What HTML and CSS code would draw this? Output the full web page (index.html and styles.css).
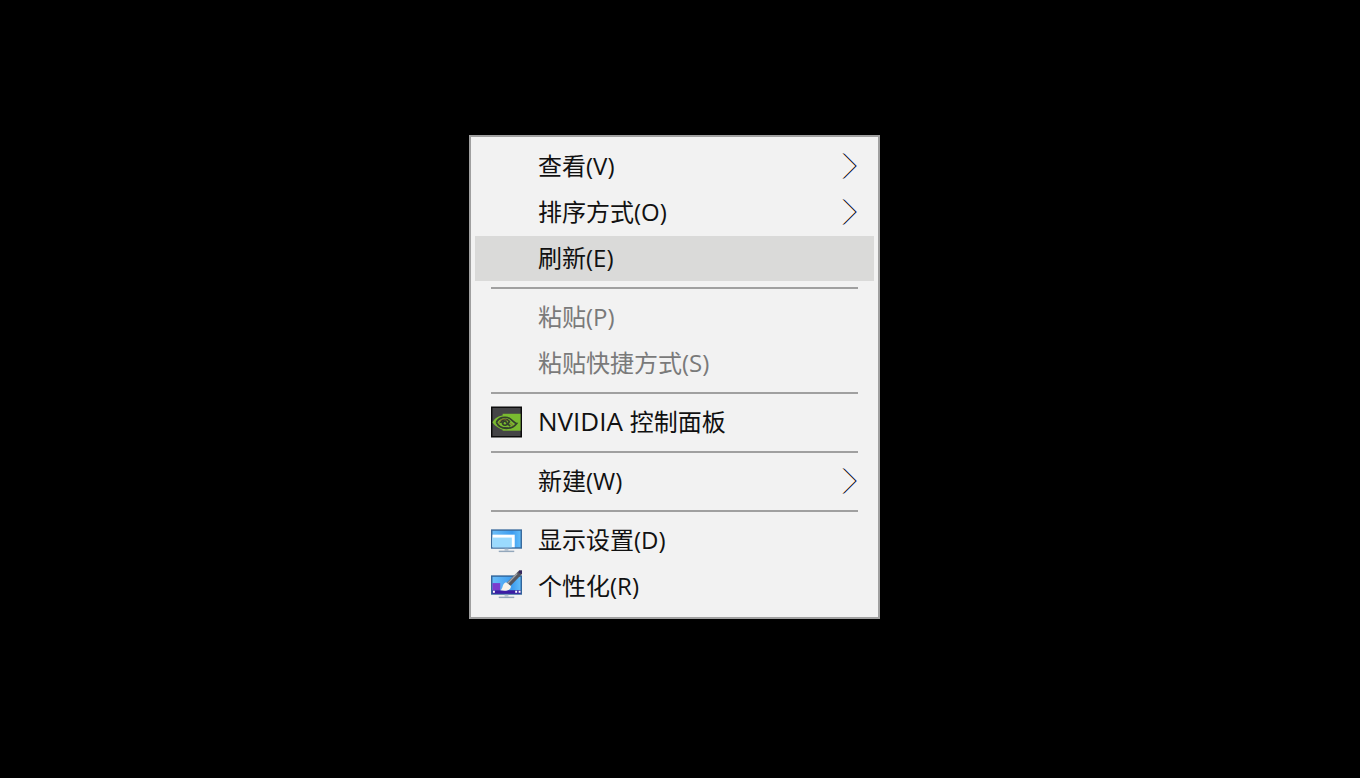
FILE: index.html
```html
<!DOCTYPE html>
<html lang="zh-CN">
<head>
<meta charset="utf-8">
<meta name="viewport" content="width=device-width, initial-scale=1">
<title>桌面</title>
<link rel="stylesheet" href="styles.css">
</head>
<body class="desktop">
<div class="menu" role="menu">
  <div class="group">
    <button class="item" role="menuitem"><span class="icon"></span><span class="label">查看(V)</span><svg class="arrow" viewBox="0 0 16 28"><path class="fringe-warm" d="M.5 1.500L13 14L.5 26.500"/><path class="fringe-cool" d="M2.200 1.500L14.700 14L2.200 26.500"/><path class="stroke" d="M1.500 1.500L14 14L1.500 26.500"/></svg></button>
    <button class="item" role="menuitem"><span class="icon"></span><span class="label">排序方式(O)</span><svg class="arrow" viewBox="0 0 16 28"><path class="fringe-warm" d="M.5 1.500L13 14L.5 26.500"/><path class="fringe-cool" d="M2.200 1.500L14.700 14L2.200 26.500"/><path class="stroke" d="M1.500 1.500L14 14L1.500 26.500"/></svg></button>
    <button class="item active" role="menuitem"><span class="icon"></span><span class="label">刷新(E)</span></button>
  </div>
  <hr class="separator">
  <div class="group">
    <button class="item" role="menuitem" disabled><span class="icon"></span><span class="label">粘贴(P)</span></button>
    <button class="item" role="menuitem" disabled><span class="icon"></span><span class="label">粘贴快捷方式(S)</span></button>
  </div>
  <hr class="separator">
  <div class="group">
    <button class="item" role="menuitem">
      <svg class="icon" viewBox="0 0 32 32">
        <path fill="#0b0b0b" d="M0 0h32v32H0z"/>
        <path fill="#444446" d="M1.500 1.500h29v29h-29z"/>
        <path fill="#7abb30" d="M12 7.500h18.500v17.500H12z"/>
        <path fill="#7abb30" d="M1.500 16.500C3 13 7 9.500 14 9v15.500C8 23 4 20 1.500 16.500z"/>
        <g fill="none" stroke="#34402c" stroke-width="1.700">
          <path d="M5.500 16.500c2-5 9-7 14-4 3 2 5 5 7 5-3 4-8 5.500-13 4.500"/>
          <path d="M5.500 16.500c2 4 6 6.500 12 6"/>
          <path d="M10 17c1-4 6-5 9-1.500-2 4-5 5-7 2.500 0-2 1-3 3-3 1 2 2 4 5 5"/>
        </g>
        <path fill="none" stroke="#8b642d" d="M8 18c2-6 7-6 9-3M20 17l3 3"/>
      </svg>
      <span class="label"><span class="brand">NVIDIA </span>控制面板</span></button>
  </div>
  <hr class="separator">
  <div class="group">
    <button class="item" role="menuitem"><span class="icon"></span><span class="label">新建(W)</span><svg class="arrow" viewBox="0 0 16 28"><path class="fringe-warm" d="M.5 1.500L13 14L.5 26.500"/><path class="fringe-cool" d="M2.200 1.500L14.700 14L2.200 26.500"/><path class="stroke" d="M1.500 1.500L14 14L1.500 26.500"/></svg></button>
  </div>
  <hr class="separator">
  <div class="group">
    <button class="item" role="menuitem">
      <svg class="icon" viewBox="0 0 32 32">
        <defs><linearGradient id="sky" x1="0" y1="0" x2="1" y2="0"><stop offset="0" stop-color="#6abdf8"/><stop offset=".7" stop-color="#3e9df0"/><stop offset="1" stop-color="#62bdfa"/></linearGradient></defs>
        <path fill="#3a6b9d" d="M0 5h32v20H0z"/>
        <path fill="url(#sky)" d="M1.500 6.500h29v17h-29z"/>
        <path fill="#fff" d="M1.500 10.500h23v13h-23z"/>
        <path fill="#9bdafe" d="M1.500 13.500h20v10h-20z"/>
        <path fill="#b7c4d1" d="M14 25h4v2h-4z"/>
        <path fill="#93a7bb" d="M8 27h16v1.500H8z"/>
      </svg>
      <span class="label">显示设置(D)</span></button>
    <button class="item" role="menuitem">
      <svg class="icon" viewBox="0 0 32 32">
        <path fill="#31659b" d="M0 5h32v20H0z"/>
        <path fill="url(#sky)" d="M1.500 6.500h29v14h-29z"/>
        <path fill="#7b3ccd" d="M1.500 13h8v7.500h-8z"/>
        <path fill="#3c1ca5" d="M1.500 20.500h29v3.500h-29z"/>
        <path fill="#fff" d="M2 21h2v2H2zM25 21h2v2h-2zM28.500 21h2v2h-2z"/>
        <path fill="#b7c4d1" d="M14 25h4v2h-4z"/>
        <path fill="#93a7bb" d="M8 27h16v1.500H8z"/>
        <path fill="#55565f" d="M29 0h3v3.500L20 16l-4-3z"/>
        <path fill="none" stroke="#a0a4aa" stroke-width="1.500" d="M27 3L17 13.500"/>
        <path fill="#35265e" d="M29 0h3v3.500l-3.500-1z"/>
        <path fill="#f7f3ea" d="M15.500 12l5 4c.5 4-4 6-11 4.500 3.500-2 1.500-7 6-8.500z"/>
      </svg>
      <span class="label">个性化(R)</span></button>
  </div>
</div>
</body>
</html>
```
FILE: styles.css
```css
* {
  box-sizing: border-box;
}

.desktop {
  margin: 0;
  min-height: 100vh;
  background: #000;
}

.menu {
  position: absolute;
  left: 469px;
  top: 135px;
  width: 411px;
  padding: 7px 4px 8px;
  border: 2px solid #a0a0a0;
  background: #f2f2f2;
}

.group {
  display: flex;
  flex-direction: column;
  gap: 1px;
}

.item {
  display: flex;
  align-items: center;
  gap: 16px;
  height: 45px;
  padding: 0 16px 2px;
  border: 0;
  background: transparent;
  color: #111;
  font: 400 24px/32px "Open Sans", "Noto Sans CJK SC", sans-serif;
  text-align: left;
}

.item.active {
  background: #dadad9;
}

.item:disabled {
  color: #7a7a7a;
}

.icon {
  flex: none;
  width: 31px;
  height: 32px;
}

.label {
  flex: 1;
  white-space: nowrap;
}

.brand {
  font-size: 26px;
}

.arrow {
  flex: none;
  width: 16px;
  height: 28px;
  fill: none;
}

.fringe-warm {
  stroke: #f2b56c;
}

.fringe-cool {
  stroke: #4a94f0;
}

.stroke {
  stroke: #34345c;
}

.separator {
  height: 2px;
  margin: 6px 16px;
  border: 0;
  background: #a0a0a0;
}
```
